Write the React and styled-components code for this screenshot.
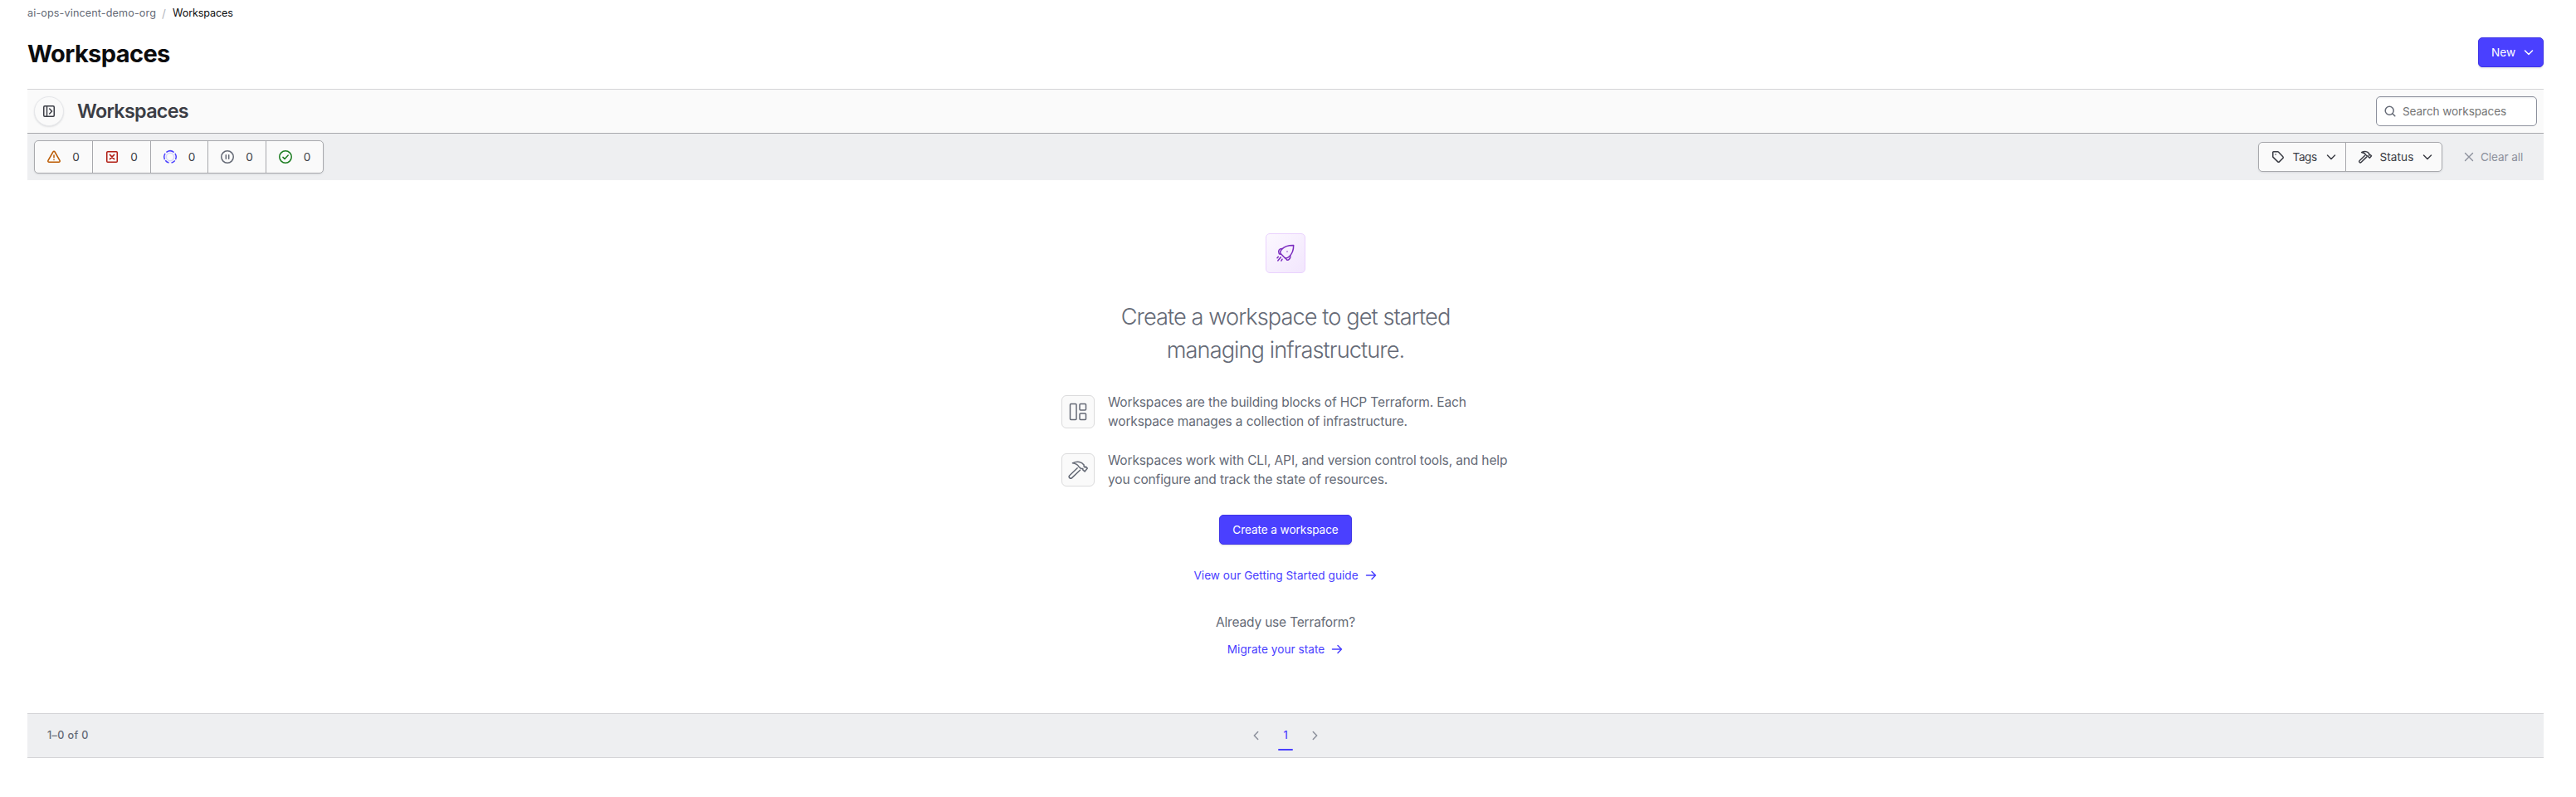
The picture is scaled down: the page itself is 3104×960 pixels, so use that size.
import React from "react";
import styled, { createGlobalStyle } from "styled-components";

const Global = createGlobalStyle`
  *, *::before, *::after { box-sizing: border-box; }
  body { margin: 0; background: #fff; font-family: Inter, "Liberation Sans", sans-serif; color: #3b3d45; }
  button { font-family: inherit; margin: 0; cursor: pointer; }
  h1, h2, p, ul { margin: 0; padding: 0; }
  a { text-decoration: none; }
  svg { display: block; flex: none; overflow: visible; }
`;

const Page = styled.div`
  height: 960px;
  padding: 0 39px 0 33px;
  overflow: hidden;
`;

const Breadcrumb = styled.nav`
  display: flex;
  height: 31px;
  align-items: center;
  font-size: 12.6px;
  line-height: 18px;
  color: #656a76;
`;
const Crumb = styled.a`
  color: ${(p) => (p.$current ? "#0c0c0e" : "#656a76")};
  letter-spacing: ${(p) => (p.$current ? "-0.12px" : "0.13px")};
`;
const Slash = styled.span`
  width: 20px;
  padding-left: 7px;
  font-size: 13.5px;
  color: #b3b5bd;
`;

const Header = styled.header`
  display: flex;
  justify-content: space-between;
  align-items: center;
  height: 76px;
  padding-bottom: 12px;
`;
const Title = styled.h1`
  position: relative;
  top: 2px;
  font-size: 29px;
  line-height: 38px;
  font-weight: 700;
  letter-spacing: -0.6px;
  color: #0c0c0e;
`;

const PrimaryButton = styled.button`
  display: flex;
  align-items: center;
  justify-content: ${(p) => (p.$menu ? "space-between" : "center")};
  width: ${(p) => p.$width}px;
  height: 36px;
  padding: ${(p) => (p.$menu ? "0 9px 0 15px" : "0")};
  border: 1px solid #3f35e6;
  border-radius: 5px;
  background: #4a40ff;
  box-shadow: 0 1px 1px rgba(101, 106, 118, 0.1), 0 2px 2px rgba(101, 106, 118, 0.08);
  color: #fff;
  font-size: 13.6px;
  line-height: 16px;
  letter-spacing: ${(p) => (p.$menu ? "0.03px" : "-0.08px")};
`;

const PanelBar = styled.section`
  display: flex;
  justify-content: space-between;
  align-items: center;
  height: 54px;
  padding: 0 8px;
  border-top: 1px solid #d4d4d7;
  border-bottom: 1px solid #a8a9ad;
  background: #fafafa;
`;
const PanelLead = styled.div`
  display: flex;
  align-items: center;
`;
const RoundButton = styled.button`
  display: flex;
  align-items: center;
  justify-content: center;
  width: 36px;
  height: 36px;
  padding: 0;
  border: 1px solid #e6e7ea;
  border-radius: 50%;
  background: #fafafa;
  box-shadow: 0 1px 2px rgba(101, 106, 118, 0.18);
  color: #3b3d45;
`;
const PanelTitle = styled.h2`
  margin-left: 16px;
  font-size: 23.3px;
  line-height: 30px;
  font-weight: 600;
  letter-spacing: -0.68px;
  color: #3b3d45;
`;
const SearchField = styled.label`
  display: flex;
  align-items: center;
  gap: 7.5px;
  width: 194px;
  height: 36px;
  padding-left: 7.5px;
  border: 1px solid #8c909c;
  border-radius: 5px;
  background: #fff;
  box-shadow: inset 0 1px 2px rgba(101, 106, 118, 0.12);
  color: #656a76;
`;
const SearchInput = styled.input`
  width: 150px;
  padding: 0;
  border: 0;
  outline: 0;
  background: transparent;
  font: 400 13.6px/18px Inter, "Liberation Sans", sans-serif;
  letter-spacing: -0.1px;
  &::placeholder { color: #757575; opacity: 1; }
`;

const FilterBar = styled.section`
  display: flex;
  justify-content: space-between;
  align-items: center;
  height: 56px;
  padding: 0 8px;
  background: #eeeff1;
`;
const Segments = styled.div`
  display: flex;
  height: ${(p) => p.$height}px;
  border: 1px solid #a8a9ad;
  border-radius: 5px;
  background: #fafafa;
  box-shadow: 0 1px 2px rgba(101, 106, 118, 0.15);
`;
const Stat = styled.button`
  display: flex;
  align-items: center;
  width: ${(p) => (p.$first ? 69 : 69.5)}px;
  padding: 0 0 0 15px;
  border: 0;
  border-left: ${(p) => (p.$first ? "0" : "1px solid #a8a9ad")};
  background: transparent;
  font-size: 13.6px;
  color: #3b3d45;
`;
const StatCount = styled.span`
  width: 9px;
  margin-left: 14px;
  text-align: center;
`;
const FilterTools = styled.div`
  display: flex;
  align-items: center;
`;
const FilterButton = styled.button`
  display: flex;
  align-items: center;
  width: ${(p) => p.$width}px;
  padding: 0 9px 0 15px;
  border: 0;
  border-left: ${(p) => (p.$first ? "0" : "1px solid #a8a9ad")};
  background: transparent;
  color: #3b3d45;
  font-size: 13.6px;
  letter-spacing: ${(p) => p.$tracking}px;
`;
const FilterName = styled.span`
  flex: 1;
  margin-left: 9.5px;
  text-align: left;
`;
const ClearButton = styled.button`
  display: flex;
  align-items: center;
  gap: 8px;
  width: 114px;
  padding: 0 0 0 26px;
  border: 0;
  background: transparent;
  color: #8c909c;
  font-size: 13.6px;
  letter-spacing: -0.1px;
  white-space: nowrap;
`;

const Empty = styled.main`
  display: flex;
  flex-direction: column;
  align-items: center;
  height: 642px;
  padding-top: 64px;
`;
const Tile = styled.div`
  display: flex;
  flex: none;
  align-items: center;
  justify-content: center;
  width: ${(p) => (p.$accent ? 48 : 40)}px;
  height: ${(p) => (p.$accent ? 48 : 40)}px;
  border: 1px solid ${(p) => (p.$accent ? "#ead2fe" : "#dbdbdc")};
  border-radius: ${(p) => (p.$accent ? 5 : 6)}px;
  background: ${(p) => (p.$accent ? "linear-gradient(135deg, #fcf8ff 0%, #f2e6fd 100%)" : "#fafafa")};
  color: ${(p) => (p.$accent ? "#7b2cbf" : "#656a76")};
`;
const Lead = styled.p`
  margin-top: 33px;
  text-align: center;
  font-size: 27.2px;
  line-height: 40px;
  font-weight: 340;
  letter-spacing: -0.93px;
  color: #656a76;
`;
const Points = styled.ul`
  display: flex;
  flex-direction: column;
  gap: 23.2px;
  width: 540px;
  margin-top: 30.6px;
  list-style: none;
`;
const Point = styled.li`
  display: flex;
  align-items: center;
  gap: 16px;
  font-size: 15.5px;
  line-height: 23.4px;
  letter-spacing: -0.135px;
  color: #656a76;
  white-space: nowrap;
`;
const Action = styled.div`
  margin-top: 30.6px;
`;
const TextLink = styled.a`
  display: flex;
  align-items: center;
  gap: 7px;
  height: 20px;
  margin-top: ${(p) => p.$top}px;
  font-size: 13.6px;
  line-height: 20px;
  letter-spacing: 0.04px;
  color: #4a40ff;
`;
const Question = styled.p`
  margin-top: 35px;
  font-size: 15.5px;
  line-height: 24px;
  letter-spacing: -0.18px;
  color: #656a76;
`;

const Footer = styled.footer`
  display: grid;
  grid-template-columns: 1fr auto 1fr;
  align-items: center;
  height: 54px;
  padding: 0 24px;
  border-top: 1px solid #d4d4d7;
  border-bottom: 1px solid #d4d4d7;
  background: #eeeff1;
`;
const Range = styled.span`
  padding-bottom: 1px;
  font-size: 12.6px;
  font-weight: 500;
  letter-spacing: 0.36px;
  color: #656a76;
`;
const Pager = styled.div`
  display: flex;
  align-items: center;
  height: 52px;
  color: #8c909c;
`;
const PageNumber = styled.button`
  position: relative;
  width: 18px;
  height: 52px;
  margin: 0 18px;
  padding: 0 0 1px;
  border: 0;
  background: transparent;
  font-size: 12.6px;
  font-weight: 500;
  color: #4a40ff;
  &::after {
    content: "";
    position: absolute;
    left: 0;
    right: 0;
    bottom: 8px;
    height: 2px;
    border-radius: 1px;
    background: #4a40ff;
  }
`;

const Icon = ({ size = 16, box = 16, color = "currentColor", width = 1.5, children }) => (
  <svg width={size} height={size} viewBox={`0 0 ${box} ${box}`} fill="none" stroke={color}
    strokeWidth={width} strokeLinecap="round" strokeLinejoin="round">
    {children}
  </svg>
);

const ChevronDown = () => <Icon><path d="M3.5 6 8 10.5 12.5 6" /></Icon>;
const Arrow = () => <Icon><path d="M2.5 8h11M9 3.5 13.5 8 9 12.5" /></Icon>;
const Hammer = ({ size, width }) => (
  <Icon size={size} box={24} width={width}>
    <path d="M5.4 3.8C8 2.5 11 2 13.5 2.4c2.6.4 4.2 1.7 5.6 3.6v1.9l1.2 1 1-.8 2 2-3.2 3.8-2.3-2v-1.3h-2l-2.9-2.4C12 6 9 4.4 5.4 3.8z" />
    <path d="M11.2 9.7 1.8 18.8a2 2 0 0 0 0 2.8 2 2 0 0 0 2.8 0L14.5 12.2" />
  </Icon>
);

const stats = [
  <Icon color="#bb5a00" key="attention">
    <path d="M6.9 2 .95 12.3a1.3 1.3 0 0 0 1.1 1.95h11.9a1.3 1.3 0 0 0 1.1-1.95L9.1 2a1.27 1.27 0 0 0-2.2 0zM8 6v2.8M8 11.3v.1" />
  </Icon>,
  <Icon color="#b01c12" key="errored">
    <rect x="1.75" y="1.75" width="12.5" height="12.5" rx="1" />
    <path d="m5.4 5.4 5.2 5.2M10.6 5.4l-5.2 5.2" />
  </Icon>,
  <Icon color="#4a40ff" key="running">
    <circle cx="8" cy="8" r="4.7" stroke="#d5d3fb" />
    <circle cx="8" cy="8" r="7.2" pathLength="360" strokeLinecap="butt" transform="rotate(-35 8 8)"
      strokeDasharray="60 12 41 24 41 12 60 15 80 15" />
  </Icon>,
  <Icon color="#656a76" key="hold">
    <circle cx="8" cy="8" r="7.25" />
    <path d="M6.3 5.8v4.4M9.7 5.8v4.4" />
  </Icon>,
  <Icon color="#1c7d21" key="applied">
    <circle cx="8" cy="8" r="7.25" />
    <path d="m4.9 8.4 2.1 2 4.2-4.4" />
  </Icon>,
];

export default function App() {
  return (
    <Page>
      <Global />
      <Breadcrumb>
        <Crumb>ai-ops-vincent-demo-org</Crumb>
        <Slash>/</Slash>
        <Crumb $current>Workspaces</Crumb>
      </Breadcrumb>
      <Header>
        <Title>Workspaces</Title>
        <PrimaryButton $menu $width={79}>New<ChevronDown /></PrimaryButton>
      </Header>

      <PanelBar>
        <PanelLead>
          <RoundButton aria-label="Expand sidebar">
            <Icon>
              <rect x="1.75" y="1.75" width="12.5" height="12.5" rx="1.2" />
              <path d="M5.5 2v12M8.7 5l2.9 3-2.9 3" />
            </Icon>
          </RoundButton>
          <PanelTitle>Workspaces</PanelTitle>
        </PanelLead>
        <SearchField>
          <Icon><circle cx="7.2" cy="7.2" r="5" /><path d="m11 11 2.8 2.8" /></Icon>
          <SearchInput placeholder="Search workspaces" />
        </SearchField>
      </PanelBar>

      <FilterBar>
        <Segments $height={40}>
          {stats.map((icon, i) => (
            <Stat key={icon.key} $first={i === 0}>{icon}<StatCount>0</StatCount></Stat>
          ))}
        </Segments>
        <FilterTools>
          <Segments $height={36}>
            <FilterButton $first $width={104} $tracking={-0.4}>
              <Icon>
                <path d="M1.75 2.5v5.2c0 .3.1.5.3.7l5.7 5.5c.5.5 1.2.5 1.7 0l4.4-4.4c.5-.5.5-1.2 0-1.7L8.4 2a1 1 0 0 0-.7-.3H2.5a.75.75 0 0 0-.75.8z" />
                <path d="M5 5h.1" />
              </Icon>
              <FilterName>Tags</FilterName>
              <ChevronDown />
            </FilterButton>
            <FilterButton $width={116} $tracking={0.06}>
              <Hammer size={16} width={2.2} />
              <FilterName>Status</FilterName>
              <ChevronDown />
            </FilterButton>
          </Segments>
          <ClearButton>
            <Icon size={12} box={12} width={1.4}><path d="m1.5 1.5 9 9M10.5 1.5l-9 9" /></Icon>
            Clear all
          </ClearButton>
        </FilterTools>
      </FilterBar>

      <Empty>
        <Tile $accent>
          <Icon size={24} box={24}>
            <path d="M21.7 2.5C16 2.4 10.7 3.7 7.8 7 6 9 5.3 10.8 6 12.2l5.3 5.5c1.3.6 3.7-.3 5.7-2.2 3.3-3.3 4.7-7.5 4.7-13z" />
            <path d="M8.3 6.5c-1.8-.2-3.3.5-4.1 1.700-.9 1.5-.8 3 .1 4.300l1.500.900M17.800 15c.2 1.800-.3 3.300-1.300 4.300-.8.800-1.700 1.200-2.600.9l-2.300-2.700" />
            <path d="M14 10v.1M3.3 16.2 2 17.7M6.300 16.800l-3.500 4.200M8 19.200l-1.100 1.900" />
          </Icon>
        </Tile>
        <Lead>Create a workspace to get started<br />managing infrastructure.</Lead>
        <Points>
          <Point>
            <Tile>
              <Icon size={24} box={24}>
                <rect x="2.5" y="2.5" width="7.5" height="19" rx="1" />
                <rect x="14" y="2.5" width="7.5" height="7.5" rx="1" />
                <rect x="14" y="14" width="7.5" height="7.5" rx="1" />
              </Icon>
            </Tile>
            <p>Workspaces are the building blocks of HCP Terraform. Each<br />workspace manages a collection of infrastructure.</p>
          </Point>
          <Point>
            <Tile><Hammer size={24} width={1.5} /></Tile>
            <p>Workspaces work with CLI, API, and version control tools, and help<br />you configure and track the state of resources.</p>
          </Point>
        </Points>
        <Action><PrimaryButton $width={160}>Create a workspace</PrimaryButton></Action>
        <TextLink $top={27}>View our Getting Started guide<Arrow /></TextLink>
        <Question>Already use Terraform?</Question>
        <TextLink $top={10}>Migrate your state<Arrow /></TextLink>
      </Empty>

      <Footer>
        <Range>1–0 of 0</Range>
        <Pager>
          <Icon><path d="M9.7 3.5 5.3 8l4.4 4.5" /></Icon>
          <PageNumber>1</PageNumber>
          <Icon><path d="M6.3 3.5 10.7 8l-4.4 4.5" /></Icon>
        </Pager>
      </Footer>
    </Page>
  );
}
